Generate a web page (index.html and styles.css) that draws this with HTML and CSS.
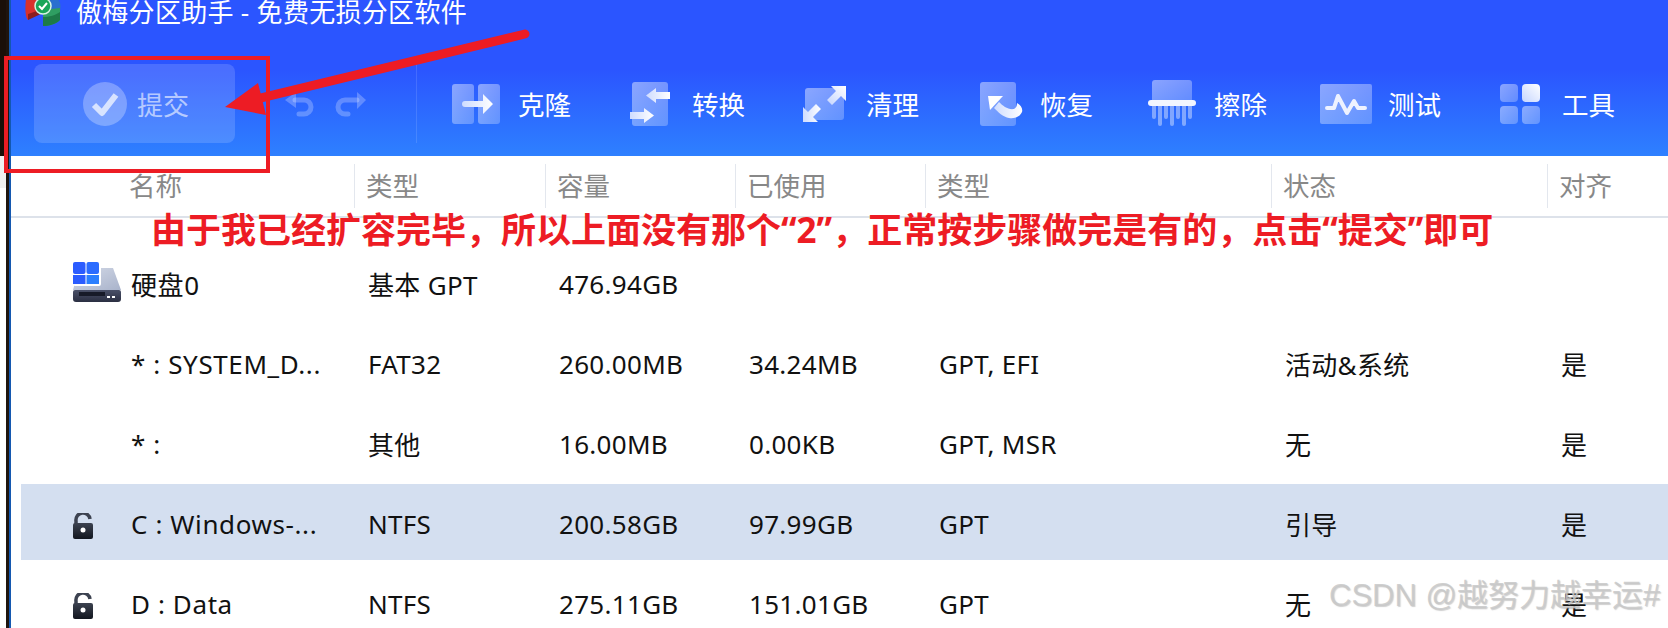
FILE: index.html
```html
<!DOCTYPE html>
<html lang="zh-CN">
<head>
    <meta charset="UTF-8">
    <title>傲梅分区助手</title>
    <link rel="stylesheet" href="styles.css">
</head>
<body>

    <div class="edge"></div>

    <div class="window">
        <div class="header">
            <div class="titlebar">
                <svg class="logo" width="36" height="28" viewBox="0 0 36 28">
                    <path d="M18 0H33C36 4 36 8 35 12L18 10Z" fill="#2a6fd0"/>
                    <path d="M1 0H18V11L3 21C0 18 0 8 1 0Z" fill="#d8312c"/>
                    <path d="M3 15L18 10V14L3 21Z" fill="#8c1d1d"/>
                    <path d="M18 11L35 9V21C31 25 24 27 18 27Z" fill="#2f9e62"/>
                    <path d="M18 18C24 18 31 16 35 13V21C31 25 24 27 18 27Z" fill="#1d7a48"/>
                    <circle cx="18" cy="7" r="8" fill="#18a558" stroke="#d8f5e4" stroke-width="1.5"/>
                    <path d="M14 7L17 10L22 4" fill="none" stroke="#fff" stroke-width="2"/>
                </svg>
                <span>傲梅分区助手 - 免费无损分区软件</span>
            </div>

            <div class="toolbar">
                <div class="commit">
                    <svg width="44" height="44" viewBox="0 0 44 44">
                        <circle cx="22" cy="22" r="22" fill="#fff" fill-opacity=".28"/>
                        <path d="M11 23L19 31L33 13" fill="none" stroke="#fff" stroke-opacity=".7" stroke-width="6" stroke-linejoin="round"/>
                    </svg>
                    <span>提交</span>
                </div>

                <svg class="history" width="82" height="30" viewBox="0 0 82 30">
                    <g fill="#fff" fill-opacity=".25">
                        <path d="M0 11L11 3V19Z"/>
                        <path d="M72 3L81 11L72 20Z"/>
                    </g>
                    <g fill="none" stroke="#fff" stroke-opacity=".25" stroke-width="5" stroke-linecap="round">
                        <path d="M10 11H19A7 7 0 0 1 19 25H14"/>
                        <path d="M72 11H60A7 7 0 0 0 60 25H63"/>
                    </g>
                </svg>

                <div class="divider"></div>

                <div class="tools">
                    <div class="tool">
                        <svg width="52" height="52" viewBox="0 0 52 52">
                            <defs>
                                <linearGradient id="panel" x1="0" y1="0" x2="1" y2="1">
                                    <stop offset="0" stop-color="#fff" stop-opacity=".45"/>
                                    <stop offset="1" stop-color="#fff" stop-opacity=".25"/>
                                </linearGradient>
                                <linearGradient id="shine" x1="0" y1="0" x2="1" y2="0">
                                    <stop offset="0" stop-color="#cfdcff"/>
                                    <stop offset="1" stop-color="#fff"/>
                                </linearGradient>
                                <linearGradient id="shine2" x1="1" y1="0" x2="0" y2="1">
                                    <stop offset="0" stop-color="#fff"/>
                                    <stop offset="1" stop-color="#c5d5ff"/>
                                </linearGradient>
                            </defs>
                            <rect x="2" y="6" width="22" height="40" rx="3" fill="url(#panel)"/>
                            <rect x="28" y="6" width="22" height="40" rx="3" fill="url(#panel)"/>
                            <path d="M15 23H33V16L43 26L33 36V29H15A3 3 0 0 1 15 23Z" fill="url(#shine)"/>
                        </svg>
                        <span>克隆</span>
                    </div>
                    <div class="tool">
                        <svg width="52" height="52" viewBox="0 0 52 52">
                            <rect x="8" y="4" width="36" height="44" rx="3" fill="url(#panel)"/>
                            <path d="M46 14V21H32V25L22 17.500L32 10V14Z" fill="url(#shine)"/>
                            <path d="M6 34H20V30L30 37.500L20 45V41H6Z" fill="url(#shine)"/>
                        </svg>
                        <span>转换</span>
                    </div>
                    <div class="tool">
                        <svg width="52" height="52" viewBox="0 0 52 52">
                            <rect x="7" y="10" width="39" height="32" rx="3" fill="url(#panel)"/>
                            <path d="M48 8V23L43 18L34 27L29 22L38 13L33 8Z" fill="url(#shine2)"/>
                            <path d="M5 44V29L10 34L18 26L23 31L15 39L20 44Z" fill="url(#shine)"/>
                        </svg>
                        <span>清理</span>
                    </div>
                    <div class="tool">
                        <svg width="52" height="52" viewBox="0 0 52 52">
                            <rect x="8" y="4" width="36" height="44" rx="3" fill="url(#panel)"/>
                            <path d="M16 18H31L18 32Z" fill="#fff"/>
                            <path d="M27 24C31 28 36 32 42 31C44 30 45 28 45 25C49 27 51 31 50 34C48 39 42 41 37 40C31 39 26 34 22 30Z" fill="url(#shine)"/>
                        </svg>
                        <span>恢复</span>
                    </div>
                    <div class="tool">
                        <svg width="52" height="52" viewBox="0 0 52 52">
                            <path d="M9 2H43A3 3 0 0 1 46 5V24H6V5A3 3 0 0 1 9 2Z" fill="url(#panel)"/>
                            <g fill="#fff" fill-opacity=".4">
                                <rect x="6" y="26" width="4" height="15" rx="2"/>
                                <rect x="12" y="26" width="4" height="22" rx="2"/>
                                <rect x="18" y="26" width="4" height="15" rx="2"/>
                                <rect x="24" y="26" width="4" height="22" rx="2"/>
                                <rect x="30" y="26" width="4" height="15" rx="2"/>
                                <rect x="36" y="26" width="4" height="22" rx="2"/>
                                <rect x="42" y="26" width="4" height="15" rx="2"/>
                            </g>
                            <rect x="2" y="22" width="48" height="6" rx="3" fill="#f2f5ff"/>
                        </svg>
                        <span>擦除</span>
                    </div>
                    <div class="tool">
                        <svg width="52" height="52" viewBox="0 0 52 52">
                            <rect y="6" width="52" height="40" rx="2" fill="url(#panel)"/>
                            <path d="M7 30H14L18 18L27 35L34 23L38 30H45" fill="none" stroke="#eef2ff" stroke-width="4" stroke-linecap="round" stroke-linejoin="round"/>
                        </svg>
                        <span>测试</span>
                    </div>
                    <div class="tool">
                        <svg width="52" height="52" viewBox="0 0 52 52">
                            <rect x="6" y="6" width="18" height="18" rx="4" fill="url(#panel)"/>
                            <rect x="28" y="6" width="18" height="18" rx="4" fill="url(#shine2)"/>
                            <rect x="6" y="28" width="18" height="18" rx="4" fill="url(#panel)"/>
                            <rect x="28" y="28" width="18" height="18" rx="4" fill="url(#panel)"/>
                        </svg>
                        <span>工具</span>
                    </div>
                </div>
            </div>
        </div>

        <div class="columns">
            <div class="col col-name">名称</div>
            <div class="col">类型</div>
            <div class="col">容量</div>
            <div class="col">已使用</div>
            <div class="col">类型</div>
            <div class="col">状态</div>
            <div class="col">对齐</div>
        </div>

        <div class="rows">
            <div class="row">
                <div class="name">
                    <svg class="disk" width="48" height="40" viewBox="0 0 48 40">
                        <defs>
                            <linearGradient id="body" x1="0" y1="0" x2="1" y2="1">
                                <stop offset="0" stop-color="#d5dbe8"/>
                                <stop offset="1" stop-color="#a9b3cb"/>
                            </linearGradient>
                            <linearGradient id="base" x1="0" y1="0" x2="0" y2="1">
                                <stop offset="0" stop-color="#4a5068"/>
                                <stop offset="1" stop-color="#2b2f42"/>
                            </linearGradient>
                        </defs>
                        <path d="M6 6H40L48 28H0Z" fill="url(#body)"/>
                        <path d="M0 30A2 2 0 0 1 2 28H46A2 2 0 0 1 48 30V37A3 3 0 0 1 45 40H3A3 3 0 0 1 0 37Z" fill="url(#base)"/>
                        <rect x="6" y="30" width="26" height="4" fill="#171a28"/>
                        <rect x="34" y="34" width="3" height="2" fill="#fff"/>
                        <rect x="39" y="34" width="3" height="2" fill="#fff"/>
                        <rect width="28" height="24" rx="2" fill="#fff"/>
                        <rect width="12.500" height="12" rx="2" fill="#2b5cff"/>
                        <rect x="13.500" width="12.500" height="12" rx="2" fill="#2b6cff"/>
                        <rect y="13" width="12.500" height="9" fill="#2b5cff"/>
                        <rect x="13.500" y="13" width="12.500" height="9" fill="#2b7fff"/>
                    </svg>
                    <span>硬盘0</span>
                </div>
                <div>基本 GPT</div>
                <div>476.94GB</div>
            </div>
            <div class="row">
                <div class="name"><span>* : SYSTEM_D...</span></div>
                <div>FAT32</div>
                <div>260.00MB</div>
                <div>34.24MB</div>
                <div>GPT, EFI</div>
                <div>活动&amp;系统</div>
                <div>是</div>
            </div>
            <div class="row">
                <div class="name"><span>* :</span></div>
                <div>其他</div>
                <div>16.00MB</div>
                <div>0.00KB</div>
                <div>GPT, MSR</div>
                <div>无</div>
                <div>是</div>
            </div>
            <div class="row selected">
                <div class="name">
                    <svg class="lock" width="20" height="26" viewBox="0 0 20 26">
                        <use href="#lock-shape"/>
                    </svg>
                    <span>C : Windows-...</span>
                </div>
                <div>NTFS</div>
                <div>200.58GB</div>
                <div>97.99GB</div>
                <div>GPT</div>
                <div>引导</div>
                <div>是</div>
            </div>
            <div class="row">
                <div class="name">
                    <svg class="lock" width="20" height="26" viewBox="0 0 20 26">
                        <defs>
                            <linearGradient id="lock-fill" x1="0" y1="0" x2="0" y2="1">
                                <stop offset="0" stop-color="#3c4250"/>
                                <stop offset="1" stop-color="#12161f"/>
                            </linearGradient>
                            <g id="lock-shape">
                                <path d="M3 11V8A7 7 0 0 1 17 6" fill="none" stroke="#3c4250" stroke-width="3.500"/>
                                <rect y="10" width="20" height="16" rx="2" fill="url(#lock-fill)"/>
                                <circle cx="10" cy="17" r="2.500" fill="#fff"/>
                            </g>
                        </defs>
                        <use href="#lock-shape"/>
                    </svg>
                    <span>D : Data</span>
                </div>
                <div>NTFS</div>
                <div>275.11GB</div>
                <div>151.01GB</div>
                <div>GPT</div>
                <div>无</div>
                <div>是</div>
            </div>
        </div>
    </div>

    <!-- markup added on top of the screenshot -->
    <svg class="marks" width="1668" height="628" viewBox="0 0 1668 628">
        <rect x="6" y="58" width="262" height="113" fill="none" stroke="#ed1c24" stroke-width="4"/>
        <path d="M525 34L252 100" stroke="#ed1c24" stroke-width="9" stroke-linecap="round"/>
        <path d="M225 107L258 83L266 115Z" fill="#ed1c24"/>
    </svg>
    <div class="note">由于我已经扩容完毕，所以上面没有那个“2”，正常按步骤做完是有的，点击“提交”即可</div>
    <div class="watermark">CSDN @越努力越幸运#</div>

</body>
</html>
```

FILE: styles.css
```css
html, body {
    height: 628px;
    overflow: hidden;
}
body {
    margin: 0;
    display: flex;
    position: relative;
    background-color: #fff;
    font-family: "Noto Sans", "Noto Sans CJK SC", sans-serif;
    font-size: 26px;
    color: #111;
}
.edge {
    width: 9px;
    flex: none;
    border-right: 2px solid #1458b0;
    background: linear-gradient(to bottom, #1a0f08 156px, #f0f0f0 156px, #f0f0f0 188px, #fff 188px);
    background-size: 6px 100%;
    background-repeat: no-repeat;
    box-shadow: inset -3px 0 0 #1e140e;
}
.window {
    flex: 1;
    min-width: 0;
}
.header {
    height: 156px;
    background: linear-gradient(to bottom, #2b55ff, #2b55ff 70px, #2e80ff);
    color: #fff;
}
.titlebar {
    height: 26px;
    display: flex;
    align-items: center;
    padding-left: 14px;
    font-size: 26px;
    line-height: 24px;
    letter-spacing: .3px;
    overflow: hidden;
}
.logo {
    flex: none;
    margin-right: 15px;
}
.titlebar span {
    margin-top: -2px;
}
.toolbar {
    display: flex;
    align-items: center;
    height: 79px;
    margin-top: 38px;
    padding-left: 23px;
}
.commit {
    width: 201px;
    height: 79px;
    flex: none;
    display: flex;
    align-items: center;
    justify-content: center;
    gap: 10px;
    padding-left: 3px;
    box-sizing: border-box;
    border-radius: 8px;
    background-color: rgba(255,255,255,.15);
    color: rgba(255,255,255,.6);
    font-size: 26px;
}
.history {
    flex: none;
    margin-left: 50px;
}
.divider {
    width: 1px;
    height: 79px;
    flex: none;
    margin-left: 49px;
    background-color: rgba(255,255,255,.12);
}
.tools {
    display: flex;
    margin-left: 33px;
}
.tool {
    width: 174px;
    display: flex;
    align-items: center;
    gap: 16px;
    font-size: 26.500px;
}
.tool svg {
    flex: none;
}
.columns {
    display: grid;
    grid-template-columns: 343px 191px 190px 190px 346px 276px 1fr;
    height: 60px;
    align-items: center;
    border-bottom: 2px solid #dde2ea;
    color: #888;
    font-size: 26.500px;
}
.col {
    height: 44px;
    line-height: 44px;
    padding-left: 11px;
    border-left: 1px solid #e3e7ee;
}
.col-name {
    padding-left: 118px;
    border-left: 0;
}
.rows {
    display: flex;
    flex-direction: column;
    gap: 4px;
    margin: 26px 0 0 10px;
}
.row {
    display: grid;
    grid-template-columns: 347px 191px 190px 190px 346px 276px 1fr;
    flex: none;
    height: 76px;
    align-items: center;
    padding-top: 4px;
    box-sizing: border-box;
    letter-spacing: .3px;
}
.row.selected {
    background-color: #d4dff0;
}
.name {
    display: flex;
    align-items: center;
    padding-left: 110px;
    position: relative;
    letter-spacing: .6px;
}
.disk, .lock {
    position: absolute;
    left: 52px;
}
.lock {
    top: 50%;
    margin-top: -11px;
}
.disk {
    top: 50%;
    margin-top: -22px;
}
.marks {
    position: absolute;
    left: 0;
    top: 0;
    pointer-events: none;
}
.note {
    position: absolute;
    left: 151px;
    top: 210px;
    font-size: 35px;
    line-height: 40px;
    font-weight: 700;
    color: #ed1c24;
    white-space: nowrap;
}
.watermark {
    position: absolute;
    left: 1329px;
    top: 579px;
    font-family: "Liberation Sans", "Noto Sans CJK SC", sans-serif;
    font-size: 31px;
    line-height: 34px;
    color: rgba(200,200,200,.85);
    text-shadow: 1px 1px 1px rgba(120,120,120,.35);
    white-space: nowrap;
}
```
